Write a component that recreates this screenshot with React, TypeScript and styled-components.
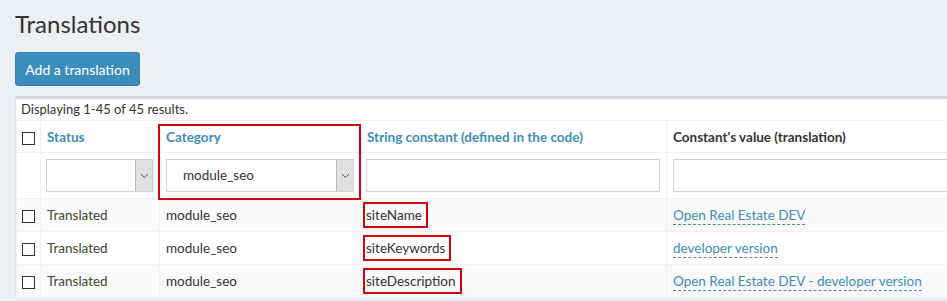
import React from "react";
import styled, { createGlobalStyle } from "styled-components";

const Global = createGlobalStyle`
  html, body { margin: 0; padding: 0; }
  body {
    background: #ecf0f5;
    font-family: "Lato", "Liberation Sans", sans-serif;
    color: #333;
    overflow: hidden;
    width: 947px;
    height: 301px;
  }
`;

const Page = styled.div`
  padding: 10px 0 0 15px;
`;

const Title = styled.h1`
  margin: 0;
  font-size: 24px;
  line-height: 28px;
  font-weight: 400;
  color: #333;
`;

const PrimaryButton = styled.button`
  margin-top: 14px;
  height: 34px;
  width: 125px;
  padding: 0;
  border: 1px solid #367fa9;
  border-radius: 3px;
  background: #3c8dbc;
  color: #fff;
  font-family: inherit;
  font-size: 14px;
  display: block;
`;

const Panel = styled.div`
  margin-top: 10px;
  width: 1100px;
  background: #fff;
  border-top: 3px solid #d2d6de;
  border-left: 1px solid #e3e6ea;
`;

const Summary = styled.div`
  height: 21px;
  line-height: 21px;
  padding-left: 5px;
  font-size: 13px;
  color: #333;
`;

const Table = styled.table`
  border-collapse: collapse;
  table-layout: fixed;
  width: 1060px;
  font-size: 13.5px;
  border-top: 1px solid #f1f1f1;
`;

const Row = styled.tr<{ $striped?: boolean }>`
  background: ${(p) => (p.$striped ? "#f9f9f9" : "#fff")};
`;

const HeadCell = styled.th<{ $link?: boolean }>`
  position: relative;
  height: 31px;
  padding: 0 6px;
  text-align: left;
  font-weight: 700;
  font-size: 13.5px;
  color: ${(p) => (p.$link ? "#3c8dbc" : "#333")};
  border: 1px solid #f1f1f1;
  border-top: none;
  vertical-align: middle;
`;

const Cell = styled.td<{ $h?: number }>`
  position: relative;
  height: ${(p) => p.$h ?? 32}px;
  padding: 0 6px;
  border: 1px solid #f1f1f1;
  vertical-align: middle;
  white-space: nowrap;
`;

const CheckCell = styled(Cell)`
  padding: 0;
  text-align: center;
`;

const CheckHead = styled(HeadCell)`
  padding: 0;
  text-align: center;
`;

const Box = styled.span`
  display: inline-block;
  width: 11px;
  height: 11px;
  border: 1px solid #333;
  background: #fff;
  vertical-align: middle;
`;

const Highlight = styled.div`
  position: absolute;
  left: -2px;
  right: -1px;
  top: 3px;
  height: 72px;
  border: 2px solid #d8000e;
  pointer-events: none;
`;

const SelectBox = styled.div`
  display: flex;
  height: 33px;
  box-sizing: border-box;
  border: 1px solid #d2d2d2;
  background: #fff;
`;

const SelectValue = styled.span`
  flex: 1;
  padding-left: 16px;
  line-height: 31px;
  font-size: 13.5px;
  color: #333;
`;

const SelectArrow = styled.span`
  width: 16px;
  background: #e1e1e1;
  border-left: 1px solid #b8b8b8;
  display: flex;
  align-items: center;
  justify-content: center;
`;

const TextInput = styled.div`
  height: 33px;
  box-sizing: border-box;
  border: 1px solid #d2d2d2;
  background: #fff;
`;

const StatusText = styled.span`
  color: #3b4a30;
`;

const Marked = styled.span`
  display: inline-block;
  margin-left: -3px;
  padding: 3px 4px 2px 1px;
  border: 2px solid #d8000e;
  line-height: 17px;
`;

const ValueLink = styled.span`
  color: #3c8dbc;
  border-bottom: 1px dashed #3c8dbc;
  padding-bottom: 1px;
`;

const Chevron = () => (
  <svg width="9" height="6" viewBox="0 0 9 6">
    <path d="M1 1l3.5 3.5L8 1" fill="none" stroke="#555" strokeWidth="1" />
  </svg>
);

const Select = ({ value }: { value?: string }) => (
  <SelectBox>
    <SelectValue>{value}</SelectValue>
    <SelectArrow>
      <Chevron />
    </SelectArrow>
  </SelectBox>
);

const rows = [
  { key: "siteName", value: "Open Real Estate DEV" },
  { key: "siteKeywords", value: "developer version" },
  { key: "siteDescription", value: "Open Real Estate DEV - developer version" },
];

export default function App() {
  return (
    <>
      <Global />
      <Page>
        <Title>Translations</Title>
        <PrimaryButton>Add a translation</PrimaryButton>
        <Panel>
          <Summary>Displaying 1-45 of 45 results.</Summary>
          <Table>
            <colgroup>
              <col style={{ width: 24 }} />
              <col style={{ width: 119 }} />
              <col style={{ width: 201 }} />
              <col style={{ width: 306 }} />
              <col style={{ width: 410 }} />
            </colgroup>
            <tbody>
              <Row>
                <CheckHead>
                  <Box />
                </CheckHead>
                <HeadCell $link>Status</HeadCell>
                <HeadCell $link>
                  Category
                  <Highlight />
                </HeadCell>
                <HeadCell $link>String constant (defined in the code)</HeadCell>
                <HeadCell>Constant's value (translation)</HeadCell>
              </Row>
              <Row>
                <Cell $h={45} />
                <Cell $h={45} style={{ paddingLeft: 5 }}>
                  <Select />
                </Cell>
                <Cell $h={45}>
                  <Select value="module_seo" />
                </Cell>
                <Cell $h={45} style={{ paddingLeft: 5 }}>
                  <TextInput />
                </Cell>
                <Cell $h={45}>
                  <TextInput />
                </Cell>
              </Row>
              {rows.map((r, i) => (
                <Row key={r.key} $striped={i % 2 === 0}>
                  <CheckCell>
                    <Box />
                  </CheckCell>
                  <Cell>
                    <StatusText>Translated</StatusText>
                  </Cell>
                  <Cell>module_seo</Cell>
                  <Cell style={{ paddingLeft: 5 }}>
                    <Marked>{r.key}</Marked>
                  </Cell>
                  <Cell>
                    <ValueLink>{r.value}</ValueLink>
                  </Cell>
                </Row>
              ))}
            </tbody>
          </Table>
        </Panel>
      </Page>
    </>
  );
}
